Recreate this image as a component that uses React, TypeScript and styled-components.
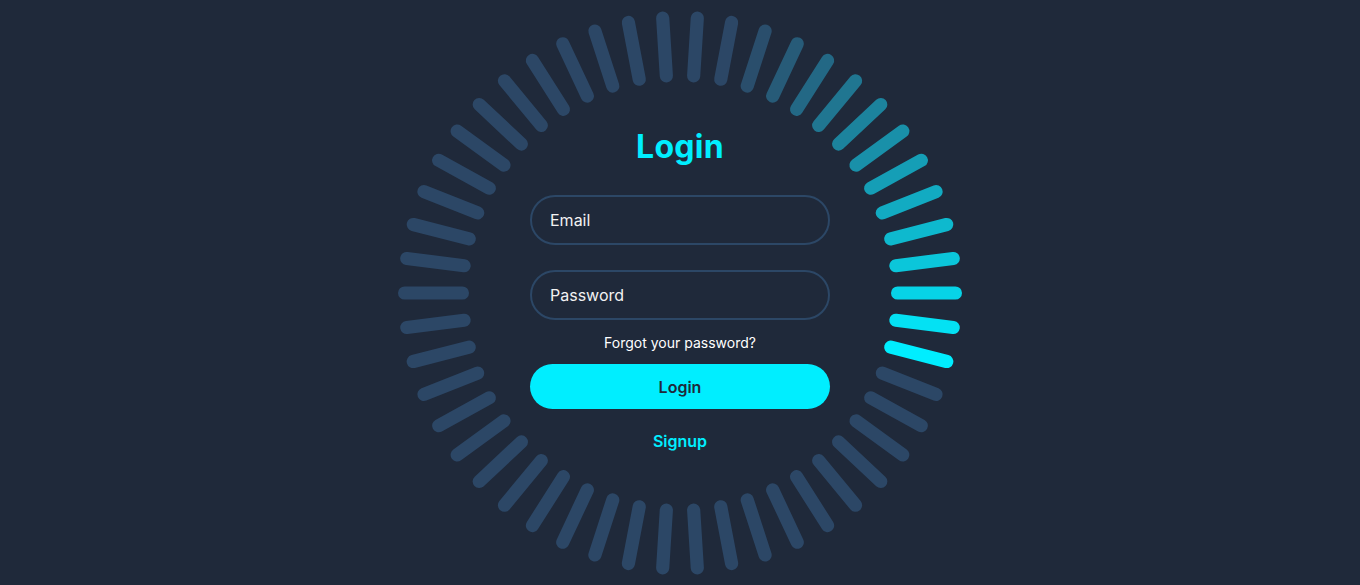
import React from 'react';
import styled, { createGlobalStyle } from 'styled-components';

const BG = '#1f293a';
const BASE = '#2c4766';
const CYAN = '#00eeff';

const GlobalStyle = createGlobalStyle`
    * {
        box-sizing: border-box;
    }
    body {
        margin: 0;
        background: ${BG};
        font-family: "Inter", "Open Sans", "Liberation Sans", sans-serif;
    }
`;

const Page = styled.div`
    min-height: 100vh;
    display: flex;
    align-items: center;
    justify-content: center;
`;

// ring and form share one grid cell
const Stack = styled.div`
    display: grid;
    place-items: center;
    & > * {
        grid-area: 1 / 1;
    }
`;

const Form = styled.form`
    width: 300px;
    padding-bottom: 5px;
    display: flex;
    flex-direction: column;
`;

const Title = styled.h2`
    margin: 0 0 28px;
    font-size: 32px;
    line-height: 40px;
    font-weight: 700;
    letter-spacing: 0.3px;
    color: ${CYAN};
    text-align: center;
`;

const Field = styled.input<{ $gap?: number }>`
    width: 100%;
    height: 50px;
    margin-top: ${p => p.$gap || 0}px;
    padding: 0 18px;
    background: transparent;
    border: 2px solid ${BASE};
    border-radius: 40px;
    outline: none;
    font-family: inherit;
    font-size: 16px;
    color: #fff;
    &::placeholder {
        color: #f2f2f2;
        opacity: 1;
    }
`;

const Forgot = styled.a`
    margin-top: 13px;
    line-height: 20px;
    font-size: 14px;
    color: #fff;
    text-align: center;
    text-decoration: none;
`;

const Button = styled.button`
    margin-top: 11px;
    height: 45px;
    width: 100%;
    border: none;
    border-radius: 40px;
    background: ${CYAN};
    color: ${BG};
    font-family: inherit;
    font-size: 16px;
    font-weight: 600;
    cursor: pointer;
`;

const Signup = styled.a`
    margin-top: 20px;
    line-height: 24px;
    font-size: 16px;
    font-weight: 600;
    color: ${CYAN};
    text-align: center;
    text-decoration: none;
`;

const COUNT = 50;
const SIZE = 570;
const R_IN = 217.6;
const R_OUT = 275.4;
const LIT = 2; // brightest bar

function mix(a: string, b: string, t: number) {
    const pa = [1, 3, 5].map(i => parseInt(a.slice(i, i + 2), 16));
    const pb = [1, 3, 5].map(i => parseInt(b.slice(i, i + 2), 16));
    const c = pa.map((v, i) => Math.round(v + (pb[i] - v) * t));
    return `rgb(${c.join(',')})`;
}

function barColor(i: number) {
    const k = (LIT - i + COUNT) % COUNT;
    const t = k * 0.08;
    return t >= 1 ? BASE : mix(CYAN, BASE, t);
}

const Ring = () => {
    const c = SIZE / 2;
    return (
        <svg width={SIZE} height={SIZE} viewBox={`0 0 ${SIZE} ${SIZE}`}>
            {Array.from({ length: COUNT }, (_, i) => {
                const a = (i * 360 / COUNT) * Math.PI / 180;
                return (
                    <line
                        key={i}
                        x1={c + R_IN * Math.cos(a)}
                        y1={c + R_IN * Math.sin(a)}
                        x2={c + R_OUT * Math.cos(a)}
                        y2={c + R_OUT * Math.sin(a)}
                        stroke={barColor(i)}
                        strokeWidth={13.2}
                        strokeLinecap="round"
                    />
                );
            })}
        </svg>
    );
};

export default function App() {
    return (
        <>
            <GlobalStyle />
            <Page>
                <Stack>
                    <Ring />
                    <Form onSubmit={e => e.preventDefault()}>
                        <Title>Login</Title>
                        <Field type="email" placeholder="Email" />
                        <Field type="password" placeholder="Password" $gap={25} />
                        <Forgot href="#">Forgot your password?</Forgot>
                        <Button type="submit">Login</Button>
                        <Signup href="#">Signup</Signup>
                    </Form>
                </Stack>
            </Page>
        </>
    );
}
